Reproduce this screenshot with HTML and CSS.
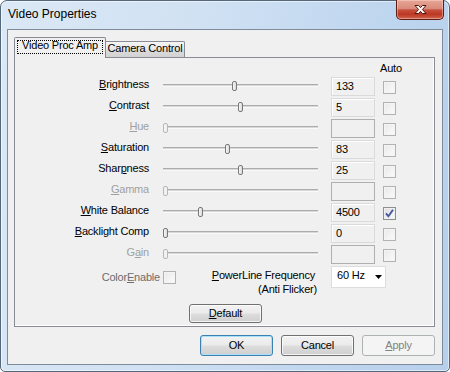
FILE: index.html
```html
<!DOCTYPE html>
<html>
<head>
<meta charset="utf-8">
<title>Video Properties</title>
<link rel="stylesheet" href="styles.css">
</head>
<body>
<div class="window">
  <div class="titlebar">
    <span class="title">Video Properties</span>
    <div class="close">
      <svg width="13" height="11" viewBox="0 0 13 11"><path d="M1 1.5H4.6L6.5 3.7L8.4 1.5H12L8.4 5.5L12 9.5H8.4L6.5 7.3L4.6 9.5H1L4.6 5.5Z" fill="#fff" stroke="#4d1710" stroke-width="1" stroke-linejoin="round"/></svg>
    </div>
  </div>
  <div class="client">
    <div class="tabs">
      <div class="tab active"><span class="focus">Video Proc Amp</span></div>
      <div class="tab inactive">Camera Control</div>
    </div>
    <div class="page">
      <div class="auto-head">Auto</div>
      <div class="grid">
        <div class="lbl"><u>B</u>rightness</div>
        <div class="slider"><div class="track"></div><div class="thumb" style="left:72px"></div></div>
        <div class="edit">133</div>
        <div class="chk"></div>

        <div class="lbl"><u>C</u>ontrast</div>
        <div class="slider"><div class="track"></div><div class="thumb" style="left:78px"></div></div>
        <div class="edit">5</div>
        <div class="chk"></div>

        <div class="lbl dis"><u>H</u>ue</div>
        <div class="slider"><div class="track"></div><div class="thumb dis" style="left:3px"></div></div>
        <div class="edit dis"></div>
        <div class="chk"></div>

        <div class="lbl"><u>S</u>aturation</div>
        <div class="slider"><div class="track"></div><div class="thumb" style="left:65px"></div></div>
        <div class="edit">83</div>
        <div class="chk"></div>

        <div class="lbl">Shar<u>p</u>ness</div>
        <div class="slider"><div class="track"></div><div class="thumb" style="left:78px"></div></div>
        <div class="edit">25</div>
        <div class="chk"></div>

        <div class="lbl dis"><u>G</u>amma</div>
        <div class="slider"><div class="track"></div><div class="thumb dis" style="left:3px"></div></div>
        <div class="edit dis"></div>
        <div class="chk"></div>

        <div class="lbl"><u>W</u>hite Balance</div>
        <div class="slider"><div class="track"></div><div class="thumb" style="left:38px"></div></div>
        <div class="edit">4500</div>
        <div class="chk checked"><svg width="11" height="11" viewBox="0 0 11 11"><path d="M2 5.4L4.4 8.3L9 1.8" fill="none" stroke="#4458a0" stroke-width="1.9"/></svg></div>

        <div class="lbl"><u>B</u>acklight Comp</div>
        <div class="slider"><div class="track"></div><div class="thumb" style="left:3px"></div></div>
        <div class="edit">0</div>
        <div class="chk"></div>

        <div class="lbl dis">G<u>a</u>in</div>
        <div class="slider"><div class="track"></div><div class="thumb dis" style="left:3px"></div></div>
        <div class="edit dis"></div>
        <div class="chk"></div>
      </div>
      <div class="extra">
        <div class="ce-lbl">Color<u>E</u>nable</div>
        <div class="chk ce-chk"></div>
        <div class="plf">
          <div class="plf-1"><u>P</u>owerLine Frequency</div>
          <div class="plf-2">(Anti Flicker)</div>
        </div>
        <div class="combo">
          <span class="combo-text">60 Hz</span>
          <svg class="arrow" width="7" height="4" viewBox="0 0 7 4"><path d="M0 0H7L3.5 4Z" fill="#000"/></svg>
        </div>
      </div>
      <div class="default-row">
        <div class="btn default-btn"><u>D</u>efault</div>
      </div>
    </div>
    <div class="buttons">
      <div class="btn ok">OK</div>
      <div class="btn">Cancel</div>
      <div class="btn disabled"><u>A</u>pply</div>
    </div>
  </div>
</div>
</body>
</html>
```

FILE: styles.css
```css
* { box-sizing: border-box; }
html, body { margin: 0; padding: 0; }
body {
  width: 450px;
  height: 372px;
  overflow: hidden;
  background: #ffffff;
  font-family: "Liberation Sans", Arial, sans-serif;
  font-size: 11px;
  letter-spacing: -0.2px;
  color: #000;
}
u { text-decoration: underline; text-underline-offset: 1px; }

.window {
  width: 450px;
  height: 372px;
  border: 1px solid #55677b;
  border-radius: 7px 7px 5px 5px;
  background: linear-gradient(100deg, #dbe8f5 0%, #d0e1f3 40%, #bfd6ef 75%, #b6cfeb 100%);
  box-shadow: inset 0 0 0 1px rgba(255,255,255,0.55);
  padding: 0 6px 6px 6px;
  display: flex;
  flex-direction: column;
}

.titlebar {
  height: 28px;
  display: flex;
  align-items: flex-start;
}
.title {
  font-size: 12px;
  letter-spacing: 0;
  line-height: 14px;
  margin: 6px 0 0 1px;
}
.close {
  margin: -1px -1px 0 auto;
  width: 48px;
  height: 20px;
  border: 1px solid #5e1d14;
  border-top: none;
  border-radius: 0 0 5px 5px;
  background: linear-gradient(#e7a796 0%, #d98b7b 45%, #c8513d 52%, #bb3723 75%, #d0654c 100%);
  box-shadow: inset 0 0 0 1px rgba(255,220,210,0.45);
  display: flex;
  align-items: center;
  justify-content: center;
}
.close svg { margin-top: -1px; }

.client {
  flex: 1;
  border: 1px solid #7d8b9b;
  background: #f0f0f0;
  padding: 7px 7px 0 6px;
  display: flex;
  flex-direction: column;
}

.tabs {
  display: flex;
  align-items: flex-end;
  height: 21px;
  margin-bottom: -1px;
  position: relative;
  z-index: 1;
}
.tab {
  border: 1px solid #898c95;
  border-bottom: none;
}
.tab.active {
  width: 92px;
  height: 21px;
  background: #f0f0f0;
  border-radius: 2px 2px 0 0;
  padding-top: 2px;
  display: flex;
  justify-content: center;
  align-items: flex-start;
}
.focus {
  display: block;
  border: 1px dotted #000;
  line-height: 9px;
  padding: 0 4px 3px 4px;
  white-space: nowrap;
}
.tab.inactive {
  width: 79px;
  height: 16px;
  margin-bottom: 1px;
  border-left: none;
  border-radius: 0 2px 0 0;
  background: linear-gradient(#f4f4f4 0%, #e9e9e9 45%, #dcdcdc 55%, #d2d2d2 100%);
  line-height: 13px;
  text-align: center;
  white-space: nowrap;
}

.page {
  height: 270px;
  border: 1px solid #898c95;
  background: #f0f0f0;
  box-shadow: inset -1px -1px 0 #ffffff;
  padding-top: 4px;
  display: flex;
  flex-direction: column;
}
.auto-head {
  height: 14px;
  line-height: 13px;
  padding-left: 365px;
}

.grid {
  display: grid;
  grid-template-columns: 134px 160px 44px 13px;
  grid-auto-rows: 21px;
  column-gap: 11px;
}
.lbl {
  align-self: start;
  margin-top: 2px;
  line-height: 13px;
  text-align: right;
  white-space: nowrap;
}
.dis { color: #a0a0a0; }

.slider { position: relative; }
.track {
  margin: 8px 2px 0 3px;
  height: 3px;
  border-top: 1px solid #acacac;
  background: #d8d8d8;
  border-bottom: 1px solid #f9f9f9;
}
.thumb {
  position: absolute;
  top: 5px;
  width: 5px;
  height: 10px;
  border: 1px solid #787878;
  border-radius: 2px;
  background: linear-gradient(to right, #f7f7f7, #dadada);
}
.thumb.dis {
  border-color: #b7b7b7;
  background: #f2f2f2;
}

.edit {
  align-self: start;
  margin-top: 1px;
  height: 19px;
  border: 1px solid #dadada;
  box-shadow: inset 1px 1px 0 #ffffff;
  background: #f0f0f0;
  padding-left: 4px;
  line-height: 17px;
}
.edit.dis {
  border-color: #afafaf;
  box-shadow: none;
}

.chk {
  align-self: start;
  margin: 5px 0 0 -3px;
  width: 13px;
  height: 13px;
  border: 1px solid #b2b2b2;
  background: linear-gradient(135deg, #e9e9e9, #fbfbfb);
  box-shadow: inset 0 0 0 1px #f4f4f4;
}
.chk.checked {
  border-color: #8e8f8f;
  background: linear-gradient(135deg, #dcdcdc, #fbfbfb);
  box-shadow: inset 0 0 0 1px #f0f0f0;
  display: flex;
  align-items: center;
  justify-content: center;
}

.extra {
  display: flex;
  align-items: flex-start;
  height: 23px;
}
.ce-lbl {
  width: 145px;
  margin-top: 6px;
  line-height: 13px;
  text-align: right;
  color: #6d6d6d;
  white-space: nowrap;
}
.chk.ce-chk { margin: 6px 0 0 3px; }
.plf {
  width: 106px;
  margin: 3px 0 0 35px;
  line-height: 14px;
  text-align: right;
  white-space: nowrap;
}
.plf-1 {
  padding-right: 2px;
}
.combo {
  width: 55px;
  height: 22px;
  margin: 1px 0 0 14px;
  border: 1px solid #dddddd;
  background: #ffffff;
  display: flex;
  align-items: flex-start;
}
.combo-text {
  line-height: 17px;
  padding-left: 5px;
}
.arrow {
  margin: 8px 3px 0 auto;
}

.default-row {
  margin-top: 16px;
  padding-left: 2px;
  display: flex;
  justify-content: center;
}

.btn {
  width: 73px;
  border: 1px solid #707070;
  border-radius: 3px;
  background: linear-gradient(#f2f2f2 0%, #ebebeb 48%, #dddddd 52%, #cfcfcf 100%);
  box-shadow: inset 0 0 0 1px rgba(255,255,255,0.75);
  text-align: center;
  white-space: nowrap;
}
.default-btn {
  height: 19px;
  line-height: 17px;
}
.buttons {
  display: flex;
  justify-content: flex-end;
  gap: 8px;
  margin-top: 8px;
}
.buttons .btn {
  height: 21px;
  line-height: 19px;
}
.btn.ok {
  border-color: #3c7fb1;
  box-shadow: inset 0 0 0 1px #a8e0f8;
}
.btn.disabled {
  border-color: #adb2b5;
  background: #f4f4f4;
  box-shadow: none;
  color: #838383;
}
```
